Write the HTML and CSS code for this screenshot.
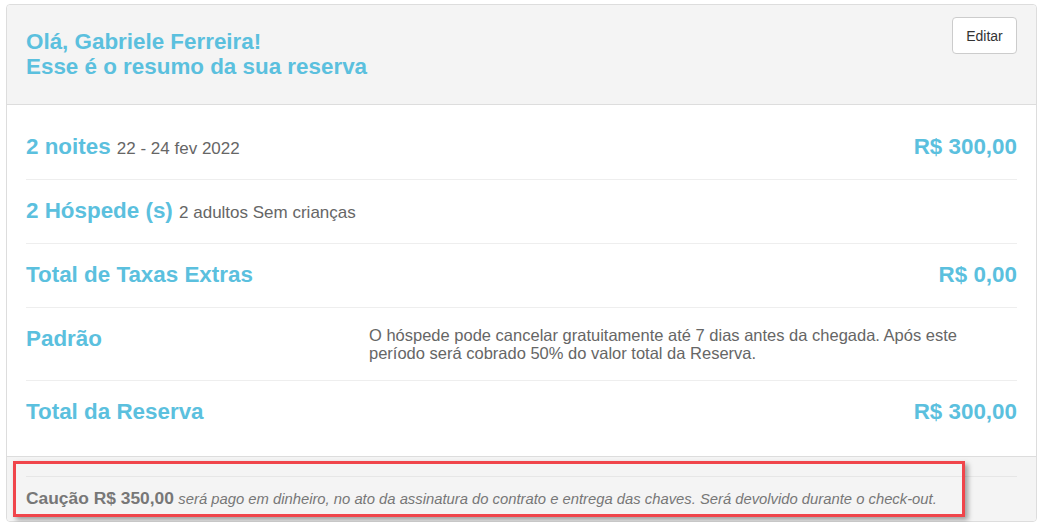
FILE: index.html
```html
<!DOCTYPE html>
<html lang="pt-BR">
<head>
<meta charset="utf-8">
<title>Resumo da reserva</title>
<link rel="stylesheet" href="styles.css">
</head>
<body>
<div class="card">
  <div class="card-header">
    <h2 class="title">Olá, Gabriele Ferreira!<br>Esse é o resumo da sua reserva</h2>
    <button class="btn">Editar</button>
  </div>
  <div class="card-body">
    <div class="row">
      <div class="label">2 noites <span class="sub">22 - 24 fev 2022</span></div>
      <div class="amount">R$ 300,00</div>
    </div>
    <div class="row">
      <div class="label">2 Hóspede (s) <span class="sub">2 adultos Sem crianças</span></div>
    </div>
    <div class="row">
      <div class="label">Total de Taxas Extras</div>
      <div class="amount">R$ 0,00</div>
    </div>
    <div class="row row-policy">
      <div class="label">Padrão</div>
      <p class="policy">O hóspede pode cancelar gratuitamente até 7 dias antes da chegada. Após este período será cobrado 50% do valor total da Reserva.</p>
    </div>
    <div class="row">
      <div class="label">Total da Reserva</div>
      <div class="amount">R$ 300,00</div>
    </div>
  </div>
  <div class="card-footer">
    <div class="footer-line"></div>
    <p class="deposit"><strong>Caução R$ 350,00</strong> <em>será pago em dinheiro, no ato da assinatura do contrato e entrega das chaves. Será devolvido durante o check-out.</em></p>
    <div class="highlight"></div>
  </div>
</div>
</body>
</html>
```
FILE: styles.css
```css
* { box-sizing: border-box; }

body {
  margin: 0;
  background: #ffffff;
  font-family: "Liberation Sans", Arial, sans-serif;
  color: #666666;
}

.card {
  margin: 4px 8px 0 6px;
  width: 1031px;
  height: 518px;
  border: 1px solid #dddddd;
  border-radius: 4px;
  background: #ffffff;
  display: flex;
  flex-direction: column;
}

.card-header {
  background: #f4f4f4;
  border-bottom: 1px solid #dddddd;
  border-radius: 4px 4px 0 0;
  padding: 12px 19px 25px 19px;
  display: flex;
  justify-content: space-between;
  align-items: flex-start;
}

.title {
  margin: 12px 0 0 0;
  font-size: 22.4px;
  line-height: 25px;
  font-weight: bold;
  color: #5bc0de;
}

.btn {
  width: 65px;
  height: 37px;
  padding: 0;
  background: #ffffff;
  border: 1px solid #cccccc;
  border-radius: 4px;
  font-family: "Liberation Sans", Arial, sans-serif;
  font-size: 14px;
  color: #333333;
}

.card-body {
  padding: 11px 19px 12px 19px;
  border-bottom: 1px solid #dddddd;
}

.row {
  display: flex;
  justify-content: space-between;
  align-items: baseline;
  padding: 18px 0 20px 0;
  border-bottom: 1px solid #eeeeee;
}

.row:last-child {
  border-bottom: none;
  padding-bottom: 20px;
}

.label, .amount {
  font-size: 22.4px;
  line-height: 25px;
  font-weight: bold;
  color: #5bc0de;
}

.sub {
  font-size: 17px;
  line-height: 17px;
  font-weight: normal;
  color: #666666;
}

.row-policy {
  display: grid;
  grid-template-columns: 343px 1fr;
  align-items: start;
  padding-bottom: 18px;
}

.policy {
  margin: 0;
  font-size: 16.5px;
  line-height: 18px;
  color: #666666;
}

.card-footer {
  position: relative;
  flex: 1;
  background: #f4f4f4;
  border-radius: 0 0 4px 4px;
  padding: 19px 19px 0 19px;
}

.footer-line {
  border-top: 1px solid #e6e6e6;
}

.deposit {
  margin: 11px 0 0 0;
  line-height: 20px;
  color: #777777;
}

.deposit strong {
  font-size: 17.4px;
  color: #777777;
}

.deposit em {
  font-size: 14.8px;
}

.highlight {
  position: absolute;
  left: 6px;
  top: 4px;
  width: 952px;
  height: 56px;
  border: 3px solid #f0454b;
  box-shadow: 3px 3px 5px rgba(0, 0, 0, 0.35);
}
```
